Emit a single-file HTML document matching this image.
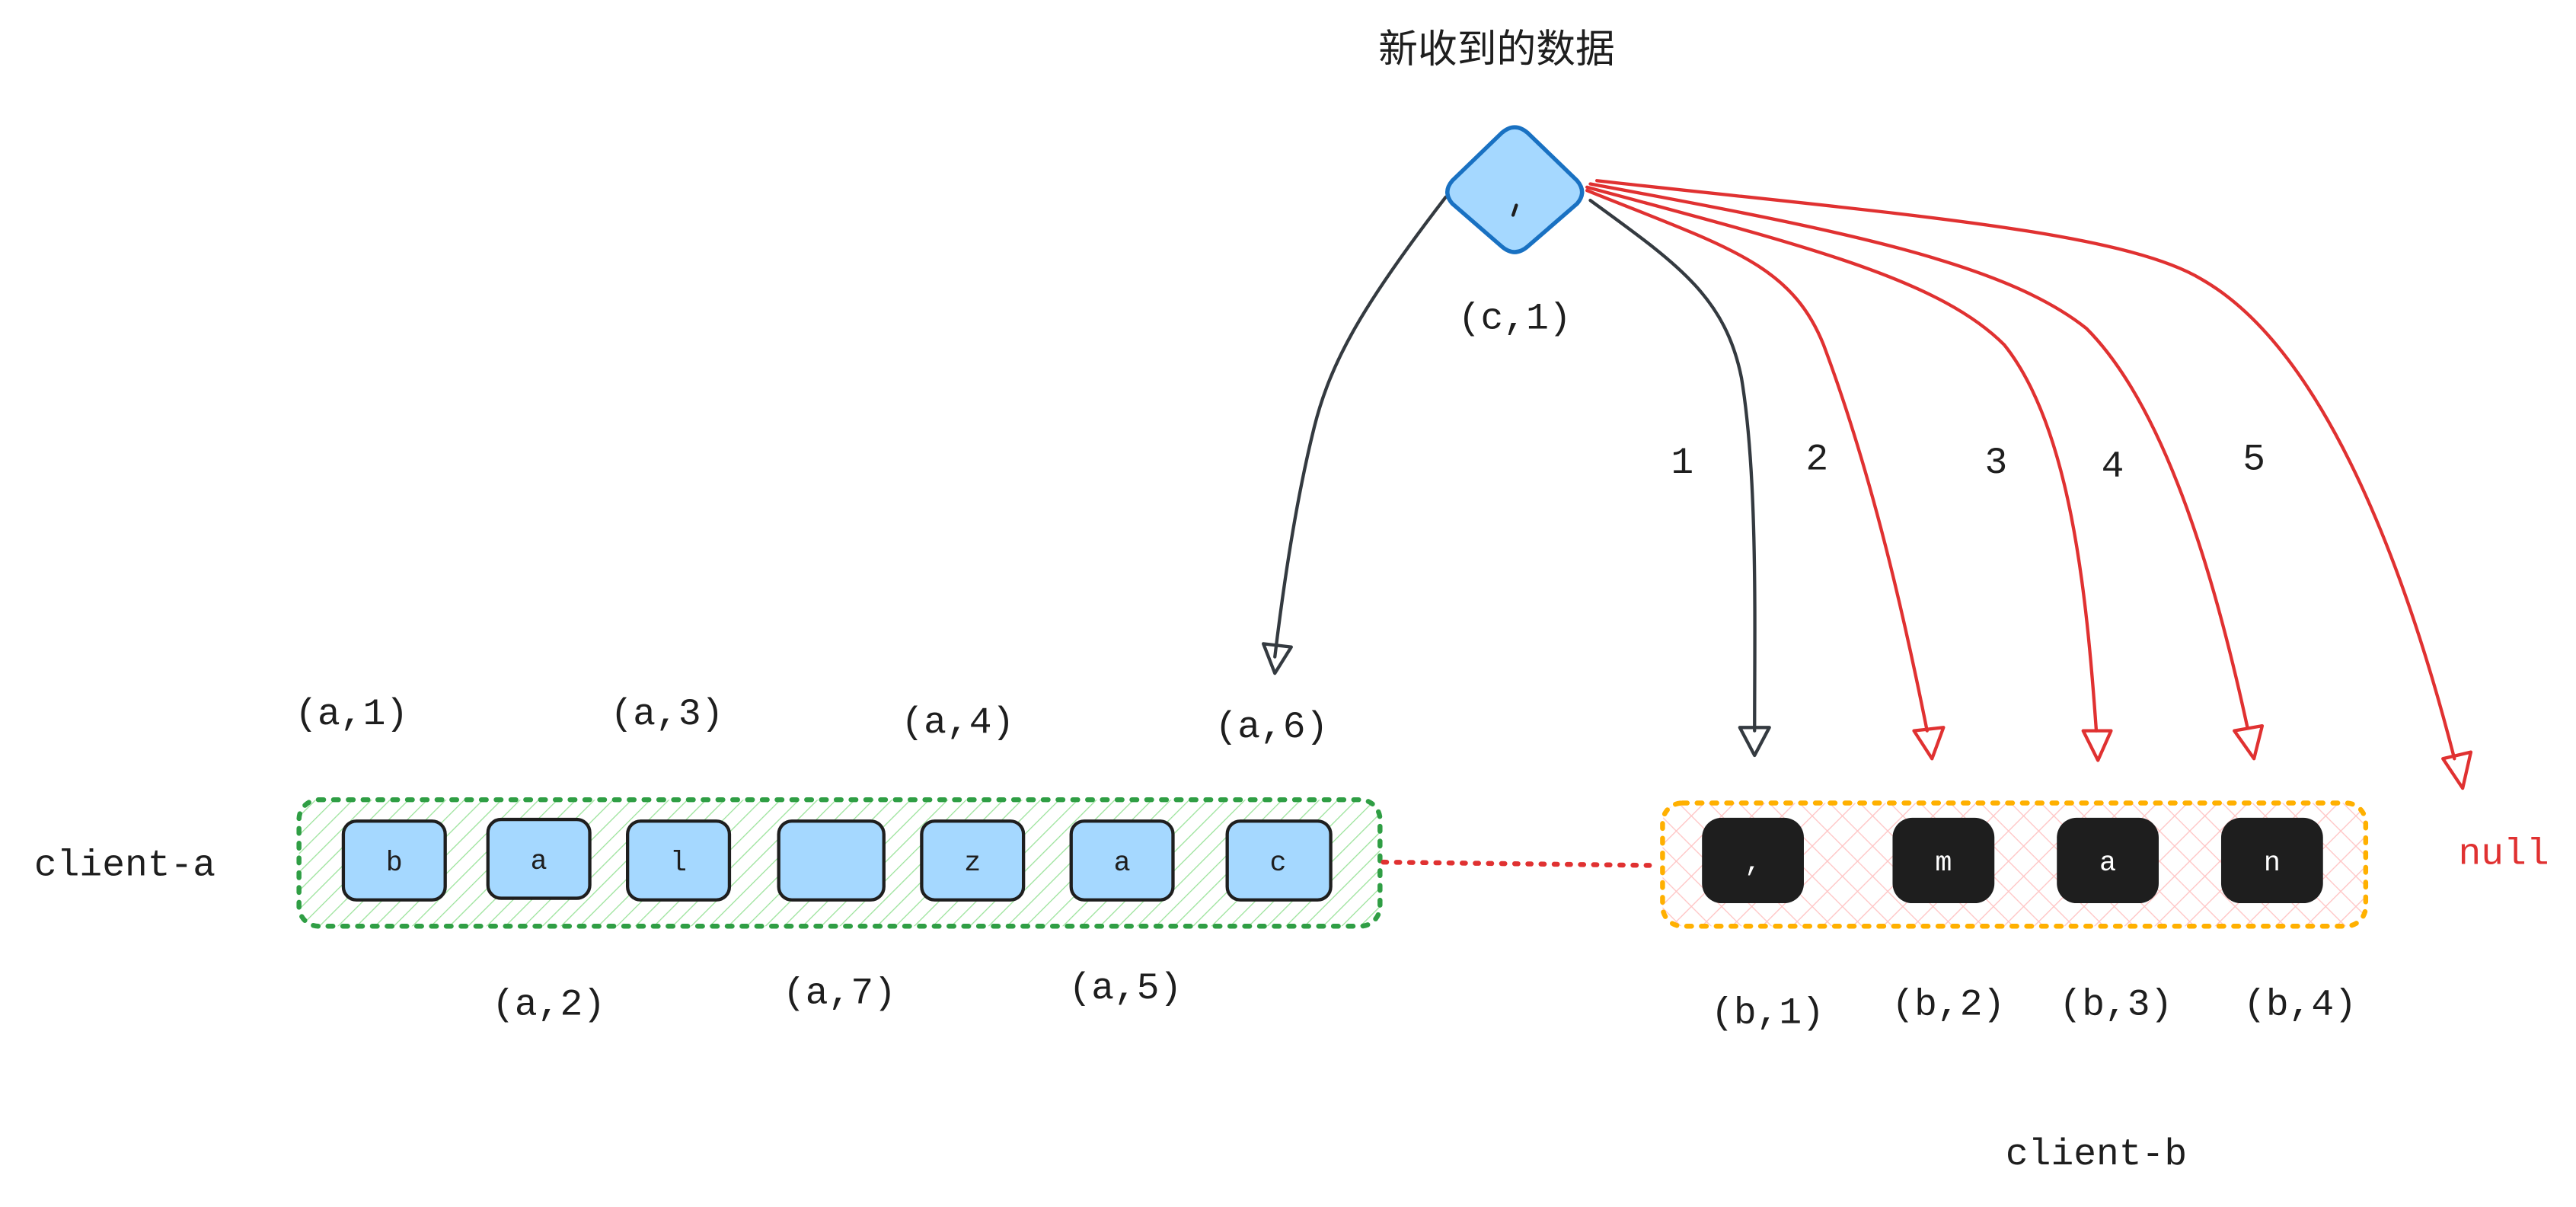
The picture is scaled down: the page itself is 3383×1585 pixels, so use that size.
<!DOCTYPE html>
<html><head><meta charset="utf-8"><style>html,body{margin:0;padding:0;background:#fff}svg{display:block}</style></head><body>
<svg width="3383" height="1585" viewBox="0 0 1568 735" preserveAspectRatio="none" xmlns="http://www.w3.org/2000/svg">
<defs>
<pattern id="g" width="8" height="8" patternUnits="userSpaceOnUse" patternTransform="rotate(45)"><line x1="0" y1="0" x2="0" y2="8" stroke="#9be39b" stroke-width="1.2"/></pattern>
<pattern id="r" width="13" height="13" patternUnits="userSpaceOnUse" patternTransform="rotate(45)"><line x1="0" y1="0" x2="0" y2="13" stroke="#ffc6c6" stroke-width="1.3"/><line x1="0" y1="0" x2="13" y2="0" stroke="#ffc6c6" stroke-width="1.3"/></pattern>
</defs>
<g font-family="Liberation Mono, monospace" font-size="23" fill="#1e1e1e" text-anchor="middle">
<text x="911" y="38" font-family="Liberation Sans, Noto Sans CJK SC, sans-serif" font-size="24">新收到的数据</text>
<text x="922" y="200">(c,1)</text>
<text x="214" y="441">(a,1)</text><text x="406" y="441">(a,3)</text><text x="583" y="446">(a,4)</text><text x="774" y="449">(a,6)</text>
<text x="334" y="618">(a,2)</text><text x="511" y="611">(a,7)</text><text x="685" y="608">(a,5)</text>
<text x="1076" y="623">(b,1)</text><text x="1186" y="618">(b,2)</text><text x="1288" y="618">(b,3)</text><text x="1400" y="618">(b,4)</text>
<text x="76" y="533">client-a</text><text x="1276" y="709">client-b</text>
<text x="1524" y="526" fill="#e03131">null</text>
<text x="1024" y="288">1</text><text x="1106" y="286">2</text><text x="1215" y="288">3</text><text x="1286" y="290">4</text><text x="1372" y="286">5</text>
</g>
<!-- containers -->
<rect x="182" y="487" width="658" height="77" rx="12" fill="url(#g)" stroke="#2f9e44" stroke-width="3" stroke-dasharray="3 6" stroke-linecap="round"/>
<rect x="1012" y="489" width="428" height="75" rx="12" fill="url(#r)" stroke="#ffb000" stroke-width="3" stroke-dasharray="3 6" stroke-linecap="round"/>
<line x1="842" y1="525" x2="1006" y2="527" stroke="#e03131" stroke-width="3" stroke-dasharray="2 6" stroke-linecap="round"/>
<g fill="#a5d8ff" stroke="#1e1e1e" stroke-width="2">
<rect x="209" y="500" width="62" height="48" rx="8"/><rect x="297" y="499" width="62" height="48" rx="8"/><rect x="382" y="500" width="62" height="48" rx="8"/><rect x="474" y="500" width="64" height="48" rx="8"/><rect x="561" y="500" width="62" height="48" rx="8"/><rect x="652" y="500" width="62" height="48" rx="8"/><rect x="747" y="500" width="63" height="48" rx="8"/>
</g>
<g fill="#1e1e1e">
<rect x="1036" y="498" width="62" height="52" rx="12"/><rect x="1152" y="498" width="62" height="52" rx="12"/><rect x="1252" y="498" width="62" height="52" rx="12"/><rect x="1352" y="498" width="62" height="52" rx="12"/>
</g>
<g font-family="Liberation Mono, monospace" font-size="17" text-anchor="middle" fill="#1e1e1e">
<text x="240" y="530">b</text><text x="328" y="529">a</text><text x="413" y="530">l</text><text x="592" y="530">z</text><text x="683" y="530">a</text><text x="778" y="530">c</text>
<g fill="#fff"><text x="1067" y="530">,</text><text x="1183" y="530">m</text><text x="1283" y="530">a</text><text x="1383" y="530">n</text></g>
</g>
<!-- arrows -->
<g fill="none" stroke-width="2" stroke-linecap="round" stroke-linejoin="round">
<path d="M880 120 C830 185 810 220 800 260 C790 300 782 350 776 400" stroke="#343a40"/>
<path d="M769 392 L776 410 L786 394 Z" stroke="#343a40"/>
<path d="M968 122 C1020 160 1050 180 1060 230 C1070 290 1068 380 1068 445" stroke="#343a40"/>
<path d="M1059 443 L1068 460 L1077 443 Z" stroke="#343a40"/>
<path d="M966 116 C1050 150 1090 160 1110 210 C1140 290 1160 380 1173 445" stroke="#e03131"/>
<path d="M1165 445 L1176 462 L1183 443 Z" stroke="#e03131"/>
<path d="M966 114 C1100 150 1180 170 1220 210 C1260 260 1270 360 1276 445" stroke="#e03131"/>
<path d="M1268 445 L1277 463 L1285 445 Z" stroke="#e03131"/>
<path d="M968 112 C1120 140 1220 160 1270 200 C1320 250 1350 360 1368 443" stroke="#e03131"/>
<path d="M1360 445 L1372 462 L1377 442 Z" stroke="#e03131"/>
<path d="M972 110 C1150 130 1290 140 1340 170 C1410 210 1460 330 1494 462" stroke="#e03131"/>
<path d="M1487 462 L1499 480 L1504 458 Z" stroke="#e03131"/>
</g>
<!-- diamond -->
<path d="M914 81 Q922 74 930 81 L960 110 Q966 117 960 124 L930 150 Q922 157 914 150 L884 124 Q878 117 884 110 Z" fill="#a5d8ff" stroke="#1971c2" stroke-width="2.5"/>
<path d="M923 125 L921 131" stroke="#1e1e1e" stroke-width="2" stroke-linecap="round"/>
</svg>
</body></html>
